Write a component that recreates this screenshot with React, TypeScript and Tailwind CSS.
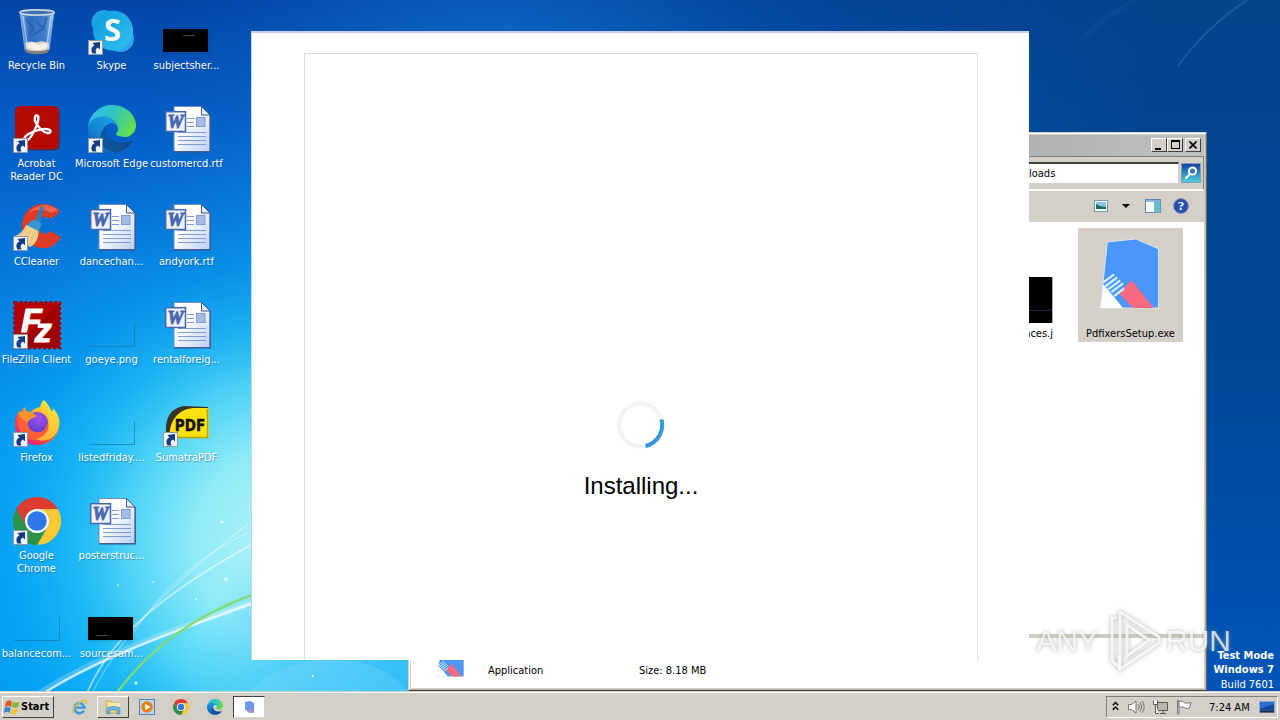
import React, { useId } from "react";

type IconProps = { className?: string };

const shellFont = "font-['DejaVu_Sans_Condensed','Noto_Sans',sans-serif]";

function RecycleBinIcon({ className }: IconProps) {
  return (
    <svg viewBox="0 0 48 48" className={className} aria-hidden="true">
      <defs>
        <linearGradient id="binGlass" x1="0" x2="1">
          <stop offset="0" stopColor="#9cc6ee" stopOpacity=".85" />
          <stop offset=".3" stopColor="#4f86d2" stopOpacity=".55" />
          <stop offset=".75" stopColor="#6fa3e0" stopOpacity=".6" />
          <stop offset="1" stopColor="#cfe4f8" stopOpacity=".85" />
        </linearGradient>
      </defs>
      <path d="M7 5L12 43C17 47 31 47 36 43L41 5Z" fill="url(#binGlass)" stroke="#86b2e2" strokeWidth=".8" />
      <path d="M12 36C18 33 21 36 25 35 30 33 33 36 36 36L36 42C30 46 18 46 13 42Z" fill="#d9d6cf" />
      <path d="M14 37l6-2 5 3 6-2 4 2-2 4-9 1-9-2z" fill="#f5f2ea" />
      <path d="M12 42C18 45 30 45 36 42L35.600 45C30 48 18 48 12.600 45Z" fill="#857d75" />
      <ellipse cx="24" cy="5.500" rx="17.200" ry="2.600" fill="#3e6fb4" stroke="#ccd5dc" strokeWidth="1.600" />
      <path d="M13 12l7 9-4 8M34 10l-4 12-10 6M23 14l8 8" stroke="#2355a5" strokeWidth="1.500" fill="none" opacity=".75" />
      <path d="M10 9l4 28" stroke="#e3f0fc" strokeWidth="1.200" opacity=".6" />
      <path d="M38 9l-4 28" stroke="#e3f0fc" strokeWidth="1.200" opacity=".6" />
    </svg>
  );
}

function SkypeIcon({ className }: IconProps) {
  return (
    <svg viewBox="0 0 48 48" className={className} aria-hidden="true">
      <defs>
        <linearGradient id="skypeBlue" x1="0" y1="0" x2="1" y2="1">
          <stop offset="0" stopColor="#0c9ade" />
          <stop offset="1" stopColor="#33c1ee" />
        </linearGradient>
      </defs>
      <circle cx="16" cy="15.500" r="12.500" fill="#1fa4e2" />
      <circle cx="32.500" cy="31.500" r="13.500" fill="#2aa5ea" />
      <circle cx="25" cy="23.500" r="20" fill="url(#skypeBlue)" />
      <text x="24.500" y="34" textAnchor="middle" fontFamily="Open Sans, sans-serif" fontWeight="700" fontSize="31" fill="#fff">S</text>
    </svg>
  );
}

function AcrobatIcon({ className }: IconProps) {
  return (
    <svg viewBox="0 0 48 48" className={className} aria-hidden="true">
      <rect x="3.500" y="2.500" width="44" height="43.500" rx="6" fill="#123f80" opacity=".55" />
      <rect x="2" y="1" width="44" height="43.500" rx="5.500" fill="#b30b00" />
      <path
        d="M11 34.500c0-4 10-9 17-10.200 6-1 10 .3 9.600 2.300-.6 2.600-5.600 1.400-9.600-2.300-4.600-4.200-7-8.500-6-12.500 .6-2.200 3.400-2 3.400 1 0 4.600-4 13.400-7.600 19.100-2.800 4-6.800 5.600-6.800 2.600z"
        fill="none"
        stroke="#fff"
        strokeWidth="2.300"
      />
    </svg>
  );
}

function EdgeIcon({ className }: IconProps) {
  const id = useId();
  return (
    <svg viewBox="0 0 256 256" className={className} aria-hidden="true">
      <defs>
        <linearGradient id={id + "a"} x1="0" x2="1">
          <stop offset="0" stopColor="#0c59a4" />
          <stop offset="1" stopColor="#114a8b" />
        </linearGradient>
        <linearGradient id={id + "b"} x1=".8" y1=".2" x2=".3" y2="1">
          <stop offset="0" stopColor="#1b9de2" />
          <stop offset=".5" stopColor="#1683d2" />
          <stop offset="1" stopColor="#0c5fb0" />
        </linearGradient>
        <linearGradient id={id + "c"} x1="0" y1=".2" x2="1" y2=".6">
          <stop offset="0" stopColor="#35c1f1" />
          <stop offset=".45" stopColor="#2fc2c4" />
          <stop offset="1" stopColor="#66e04c" />
        </linearGradient>
      </defs>
      <path fill={"url(#" + id + "a)"} d="M231,190.500c-3.400,1.800-6.900,3.400-10.500,4.700c-11.500,4.300-23.600,6.500-35.900,6.500c-47.300,0-88.500-32.500-88.500-74.300c0.100-11.400,6.400-21.900,16.400-27.300c-42.800,1.800-53.800,46.400-53.800,72.500c0,74,68.100,81.400,82.800,81.400c7.900,0,19.800-2.300,27-4.600l1.300-0.400c27.600-9.500,51-28.100,66.600-52.800c1.200-1.900,0.600-4.300-1.200-5.500C233.900,189.900,232.300,189.800,231,190.500z" />
      <path fill={"url(#" + id + "b)"} d="M105.700,241.400c-8.900-5.500-16.600-12.800-22.700-21.300c-26.300-36-18.400-86.500,17.600-112.800c3.800-2.700,7.700-5.200,11.900-7.200c3.100-1.500,8.400-4.100,15.500-4c10.100,0.100,19.600,4.900,25.700,13c4,5.400,6.300,11.900,6.400,18.700c0-0.200,24.500-79.600-80-79.600c-43.900,0-80,41.700-80,78.200c-0.200,19.300,4,38.500,12.100,56c27.600,58.800,94.800,87.600,156.400,67.100C147.500,256.100,124.500,253.200,105.700,241.400z" />
      <path fill={"url(#" + id + "c)"} d="M152.300,148.900c-0.800,1-3.300,2.500-3.300,5.700c0,2.600,1.700,5.100,4.700,7.200c14.400,10,41.500,8.700,41.600,8.700c10.700,0,21.100-2.900,30.300-8.300c18.800-11,30.400-31.100,30.400-52.900c0.300-22.400-8-37.300-11.300-43.900C223.500,23.900,177.700,0,128,0C58,0,1,56.200,0,126.200c0.500-36.500,36.800-66,80-66c3.500,0,23.500,0.300,42,10.100c16.300,8.600,24.900,18.900,30.800,29.200c6.200,10.700,7.300,24.100,7.300,29.500C160.100,134.300,157.400,142.300,152.300,148.900z" />
    </svg>
  );
}

function WordIcon({ className }: IconProps) {
  const id = useId();
  return (
    <svg viewBox="0 0 48 48" className={className} aria-hidden="true">
      <defs>
        <linearGradient id={id} x1="0" y1="0" x2="1" y2="1">
          <stop offset=".4" stopColor="#fdfeff" />
          <stop offset="1" stopColor="#b9cef2" />
        </linearGradient>
      </defs>
      <path d="M11 1.500H38.500L47 10V46.500H11Z" fill={"url(#" + id + ")"} stroke="#6f8cc4" />
      <path d="M38.500 1.500V10H47Z" fill="#e6eefa" stroke="#3f5488" />
      <path d="M47.200 10V46.800H11" fill="none" stroke="#3a5288" strokeWidth="1.200" />
      <g stroke="#7f9bd6" strokeWidth="1.100">
        <path d="M24 13.500H31M24 17.500H31M24 21.500H31M15 27.500H43M15 31.500H43M15 35.500H43M15 39.500H43" />
      </g>
      <rect x="33.500" y="12.500" width="8.500" height="9" fill="#a4bce6" stroke="#7f9bd6" />
      <rect x="2.700" y="6.700" width="19.800" height="19.800" fill="#eef3fc" stroke="#4666b0" strokeWidth="1.500" />
      <text x="12.500" y="22.500" textAnchor="middle" fontFamily="Liberation Serif, serif" fontWeight="700" fontStyle="italic" fontSize="18" fill="#4a68ae" stroke="#4a68ae" strokeWidth="1">W</text>
    </svg>
  );
}

function CCleanerIcon({ className }: IconProps) {
  return (
    <svg viewBox="0 0 48 48" className={className} aria-hidden="true">
      <path d="M47 9C42 0 22-4 12 11 4 26 13 44 28 45 38 46 44 41 48 34L37 28C33 33 26 31 25 23 25 15 33 11 38 16Z" fill="#dd3b26" />
      <path d="M45 7C38 0 22 0 15 11 20 6 31 5 38 10Z" fill="#f0654c" />
      <path d="M28 3L31 4.500 26.500 22 21 20Z" fill="#2b7fc0" />
      <path d="M18 18C21 16 28 19 28.500 22L25 29 13 23Z" fill="#3a97d4" />
      <path d="M13 22L25.500 28C26 35 22 42 17 44L2 33C7 31 11 27 13 22Z" fill="#f2cf8e" />
      <path d="M14 25L6 34M18 27L11 39M22 29L16 42" stroke="#e3ba78" strokeWidth="1" />
    </svg>
  );
}

function FileZillaIcon({ className }: IconProps) {
  return (
    <svg viewBox="0 0 48 48" className={className + " overflow-visible"} aria-hidden="true">
      <rect x="1.500" y="1.500" width="45.500" height="45.500" fill="#b30000" stroke="#a00000" strokeWidth="2.500" strokeDasharray="3 2" />
      <path d="M47 2V47H2Z" fill="#960000" opacity=".7" />
      <text x="8" y="31" fontFamily="Liberation Sans, sans-serif" fontWeight="700" fontStyle="italic" fontSize="34" fill="#fff" stroke="#fff">
        F
        <tspan dx="-7" dy="10">z</tspan>
      </text>
    </svg>
  );
}

function FirefoxIcon({ className }: IconProps) {
  return (
    <svg viewBox="0 0 48 48" className={className} aria-hidden="true">
      <defs>
        <linearGradient id="foxBody" x1=".85" y1=".1" x2=".2" y2=".95">
          <stop offset="0" stopColor="#fff14a" />
          <stop offset=".35" stopColor="#ffb02b" />
          <stop offset=".65" stopColor="#ff5036" />
          <stop offset="1" stopColor="#e31587" />
        </linearGradient>
        <radialGradient id="foxGlobe" cx=".6" cy=".3" r=".8">
          <stop offset="0" stopColor="#a54df0" />
          <stop offset="1" stopColor="#4b3ec4" />
        </radialGradient>
      </defs>
      <path d="M31 1C35 5 38 9 38.500 14 40 13 40 10 39.600 9 45 14 47 20 46.500 26 45 38 36 46 24.500 46 11 46 2 37 2 25 2 20 4 15 6.500 11L7 15C8.500 12 10 9.500 12 8 12 11 14 13 17 13.500 20 10 24 9 27 8 28 5 29 2 31 1Z" fill="url(#foxBody)" />
      <circle cx="24" cy="24" r="11" fill="url(#foxGlobe)" />
      <path d="M5 16C9 18 12 20 15 22 14 30 20 34 27 33 31 32 34 28 34 24 38 31 34 39 26 41 16 43 6 36 5 24Z" fill="#ff5e38" />
      <path d="M5 14C12 11 20 13 24 17 20 19 18 19 15 23 10 22 7 19 5 14Z" fill="#ff932e" />
      <path d="M31 1C28 9 39 15 36 27 35 35 28 39 23 40 34 45 46 37 45 24 44 12 34 11 31 1Z" fill="#ffd83a" opacity=".75" />
    </svg>
  );
}

function ChromeIcon({ className }: IconProps) {
  return (
    <svg viewBox="0 0 48 48" className={className} aria-hidden="true">
      <path d="M24 12H44.800A24 24 0 0 0 3.200 12L13.600 30A12 12 0 0 1 24 12Z" fill="#de3c30" />
      <path d="M24 12H44.800A24 24 0 0 1 24 48L34.400 30A12 12 0 0 0 24 12Z" fill="#fcc934" />
      <path d="M3.200 12A24 24 0 0 0 24 48L34.400 30A12 12 0 0 1 13.600 30Z" fill="#2b9247" />
      <circle cx="24" cy="24" r="12" fill="#fff" />
      <circle cx="24" cy="24" r="9.800" fill="#2f78ea" />
    </svg>
  );
}

function SumatraIcon({ className }: IconProps) {
  return (
    <svg viewBox="0 0 48 48" className={className} aria-hidden="true">
      <path d="M3 34C2 15 11 8 22 7L45 8V11L10 32 14 38H3Z" fill="#39342a" />
      <path d="M6.500 38C6 20 17 9.500 31 9H45.500V38Z" fill="#fce10e" />
      <path d="M44.500 10V38.500H14" fill="none" stroke="#b9a200" strokeWidth="1.500" />
      <text x="27" y="32" textAnchor="middle" fontFamily="DejaVu Sans Condensed, sans-serif" fontWeight="700" fontSize="15" fill="#111" stroke="#111" strokeWidth=".4">PDF</text>
    </svg>
  );
}

function PdfixersIcon({ className }: IconProps) {
  return (
    <svg viewBox="0 0 60 72" className={className} aria-hidden="true">
      <path d="M8 4L37 1 60 11V71H1Z" fill="#4b97f8" stroke="#d9e6f4" />
      <path d="M4 47L24 71H1Z" fill="#fff" />
      <path d="M19 55L33 43 55 71H34Z" fill="#f76a82" />
      <path d="M4 45l11-8M6 49l12-9M9 52l12-9M12 55l12-9M15 59l10-8" stroke="#d2f2fb" strokeWidth="2.200" />
    </svg>
  );
}

function ShortcutBadge() {
  return (
    <svg viewBox="0 0 15 15" className="absolute bottom-0 left-0 h-[15px] w-[15px]" aria-hidden="true">
      <rect x=".5" y=".5" width="14" height="14" fill="#f2f5f9" stroke="#8f9aa8" />
      <path d="M4.500 13.500C2.500 10 3.500 6.500 6.500 5.500L4.500 3 12 2 12 9.500 10 7.500C7.500 8.500 7 10.500 8.500 13.500Z" fill="#123d86" />
    </svg>
  );
}

function BlackThumb({ low = false }: { low?: boolean }) {
  return (
    <span className="flex h-full items-end pb-[3px]">
      <span className={low ? "flex h-[23px] w-[45px] items-end bg-black pb-1 pl-2 shadow" : "flex h-[23px] w-[45px] items-start bg-black pt-1.5 pl-5 shadow"}>
        <span className="h-px w-3 bg-[#4a4a38]" />
      </span>
    </span>
  );
}

function FaintThumb() {
  return (
    <span className="flex h-full items-end pb-[2px] pl-px">
      <span className="h-6 w-[46px] border-r border-b border-[#17709c]/60" />
    </span>
  );
}

type Item = { label: string; art: React.ReactNode; shortcut?: boolean };

const full = "h-12 w-12";

const items: Item[] = [
  { label: "Recycle Bin", art: <RecycleBinIcon className={full} /> },
  { label: "Acrobat\nReader DC", art: <AcrobatIcon className={full} />, shortcut: true },
  { label: "CCleaner", art: <CCleanerIcon className={full} />, shortcut: true },
  { label: "FileZilla Client", art: <FileZillaIcon className={full} />, shortcut: true },
  { label: "Firefox", art: <FirefoxIcon className={full} />, shortcut: true },
  { label: "Google\nChrome", art: <ChromeIcon className={full} />, shortcut: true },
  { label: "balancecom...", art: <FaintThumb /> },
  { label: "Skype", art: <SkypeIcon className={full} />, shortcut: true },
  { label: "Microsoft Edge", art: <EdgeIcon className={full} />, shortcut: true },
  { label: "dancechan...", art: <WordIcon className={full} /> },
  { label: "goeye.png", art: <FaintThumb /> },
  { label: "listedfriday....", art: <FaintThumb /> },
  { label: "posterstruc...", art: <WordIcon className={full} /> },
  { label: "sourcesam...", art: <BlackThumb low /> },
  { label: "subjectsher...", art: <BlackThumb /> },
  { label: "customercd.rtf", art: <WordIcon className={full} /> },
  { label: "andyork.rtf", art: <WordIcon className={full} /> },
  { label: "rentalforeig...", art: <WordIcon className={full} /> },
  { label: "SumatraPDF", art: <SumatraIcon className={full} />, shortcut: true },
];

function Wallpaper() {
  return (
    <svg viewBox="0 0 1280 692" preserveAspectRatio="none" className="absolute inset-0 h-full w-full" aria-hidden="true">
      <defs>
        <linearGradient id="sky" x1="0" y1="0" x2="0" y2="1">
          <stop offset="0" stopColor="#0345a7" />
          <stop offset=".2" stopColor="#045fc8" />
          <stop offset=".45" stopColor="#067de0" />
          <stop offset=".65" stopColor="#0499f0" />
          <stop offset="1" stopColor="#009ff4" />
        </linearGradient>
        <radialGradient id="glow" gradientUnits="userSpaceOnUse" cx="290" cy="545" r="440">
          <stop offset="0" stopColor="#b4f2f8" />
          <stop offset=".22" stopColor="#90ebf7" />
          <stop offset=".36" stopColor="#5adaf6" stopOpacity=".92" />
          <stop offset=".5" stopColor="#22bff6" stopOpacity=".75" />
          <stop offset=".65" stopColor="#0aa8f4" stopOpacity=".5" />
          <stop offset="1" stopColor="#0a80e0" stopOpacity="0" />
        </radialGradient>
        <radialGradient id="floor" gradientUnits="userSpaceOnUse" cx="390" cy="700" r="200">
          <stop offset="0" stopColor="#2fbdf7" stopOpacity=".95" />
          <stop offset=".5" stopColor="#3cc4f8" stopOpacity=".7" />
          <stop offset="1" stopColor="#3cc4f8" stopOpacity="0" />
        </radialGradient>
        <radialGradient id="topGlow" gradientUnits="userSpaceOnUse" cx="520" cy="220" r="420">
          <stop offset="0" stopColor="#1f9ae8" stopOpacity=".8" />
          <stop offset="1" stopColor="#0a60c0" stopOpacity="0" />
        </radialGradient>
        <linearGradient id="east" x1="0" y1="0" x2="0" y2="1">
          <stop offset="0" stopColor="#05438a" />
          <stop offset=".5" stopColor="#004797" />
          <stop offset="1" stopColor="#0055b8" />
        </linearGradient>
        <linearGradient id="eastFade" x1="0" x2="1">
          <stop offset=".4" stopColor="#fff" stopOpacity="0" />
          <stop offset=".9" stopColor="#fff" />
        </linearGradient>
        <mask id="eastMask">
          <rect width="1280" height="692" fill="url(#eastFade)" />
        </mask>
      </defs>
      <rect width="1280" height="692" fill="url(#sky)" />
      <rect width="1280" height="692" fill="url(#topGlow)" />
      <rect width="1280" height="692" fill="url(#glow)" />
      <rect width="1280" height="692" fill="url(#floor)" />
      <rect width="1280" height="692" fill="url(#east)" mask="url(#eastMask)" />
      <path d="M250 692C285 655 370 645 408 692Z" fill="#8adcfb" opacity=".25" />
      <g fill="none" stroke="#fff">
        <path d="M40 694C100 655 190 625 258 602" strokeWidth="6" opacity=".22" />
        <path d="M44 694C105 655 190 627 258 602" strokeWidth="2.500" opacity=".7" />
        <path d="M87 694C110 640 160 595 256 543" strokeWidth="1.800" opacity=".55" />
        <path d="M92 694C125 630 165 590 254 520" strokeWidth="1.200" opacity=".35" />
        <path d="M130 640C160 590 200 555 256 530" strokeWidth="1" opacity=".4" />
      </g>
      <path d="M118 692C155 643 200 615 256 594" fill="none" stroke="#7fdc6c" strokeWidth="2.200" />
      <g fill="#fff" opacity=".7">
        <circle cx="222" cy="523" r="1.500" />
        <circle cx="226" cy="580" r="1.800" />
        <circle cx="136" cy="684" r="1.800" />
        <circle cx="153" cy="583" r="1" />
        <circle cx="118" cy="586" r="1" />
        <circle cx="196" cy="600" r="1" />
        <circle cx="313" cy="677" r="1.200" />
      </g>
      <path d="M1080 42C1100 20 1115 12 1135 0" fill="none" stroke="#3f79bd" strokeWidth="5" opacity=".1" />
      <path d="M1178 66C1200 35 1225 15 1247 0" fill="none" stroke="#6ea3dd" strokeWidth="2" opacity=".22" />
    </svg>
  );
}

const raised =
  "border border-t-white border-l-white border-r-[#404040] border-b-[#404040] bg-[#d4d0c8]";

function ExplorerWindow() {
  return (
    <section className="absolute top-[132px] right-[73px] bottom-0 left-[408px] flex flex-col border border-[#d4d0c8] border-r-[#6b6860] border-b-[#404040] bg-[#d4d0c8]">
      <div className="flex flex-1 flex-col border border-white border-r-[#b5b1a8] border-b-[#b5b1a8] p-px">
        <header className="flex h-[21px] shrink-0 items-center justify-end bg-gradient-to-r from-[#808080] to-[#c0c0c0] pr-[3px] pb-[2px]">
          <button aria-label="Minimize" className={`flex h-[14px] w-4 items-end justify-start pb-px pl-[3px] ${raised}`}>
            <span className="h-[2px] w-1.5 bg-black" />
          </button>
          <button aria-label="Maximize" className={`flex h-[14px] w-4 items-center justify-center ${raised}`}>
            <span className="h-[9px] w-[9px] border border-t-2 border-black" />
          </button>
          <button aria-label="Close" className={`ml-[2px] flex h-[14px] w-4 items-center justify-center ${raised}`}>
            <svg viewBox="0 0 8 8" className="h-2 w-2" aria-hidden="true">
              <path d="M.5.5l7 7M7.500.5l-7 7" stroke="#000" strokeWidth="1.600" />
            </svg>
          </button>
        </header>
        <div className="flex h-[34px] shrink-0 items-center justify-end gap-[2px] border border-[#808080] border-l-0 border-b-white pr-[2px]">
          <input
            aria-label="Search"
            defaultValue="loads"
            className="h-[22px] w-[154px] border border-t-2 border-[#d4d0c8] border-t-[#404040] bg-white pl-[3px] text-[11px] leading-[14px] text-black outline-none"
          />
          <button aria-label="Start search" className="flex h-5 w-5 items-center justify-center border border-[#7d9cc0] bg-gradient-to-b from-[#1d3fa6] to-[#4fd0d8]">
            <svg viewBox="0 0 16 16" className="h-4 w-4" fill="none" stroke="#fff" aria-hidden="true">
              <circle cx="9.500" cy="6" r="3.600" strokeWidth="2" fill="#3f74c8" />
              <path d="M7 9L2.500 13.500" strokeWidth="2.400" />
            </svg>
          </button>
        </div>
        <div className="flex h-8 shrink-0 items-center justify-end border-t border-white pr-[15px] pb-[2px]">
          <button aria-label="Change view">
            <svg viewBox="0 0 14 12" className="h-3 w-[14px]" aria-hidden="true">
              <rect x=".5" y=".5" width="13" height="11" fill="#fff" stroke="#6f9cc0" />
              <rect x="2" y="2" width="10" height="7" fill="#8cc4ec" />
              <path d="M2 4l4 2 6 1v2H2z" fill="#1c6c5c" />
            </svg>
          </button>
          <button aria-label="More views" className="ml-3 flex w-3 justify-center">
            <svg viewBox="0 0 8 4" className="h-1 w-2" aria-hidden="true">
              <path d="M0 0H8L4 4Z" fill="#000" />
            </svg>
          </button>
          <button aria-label="Preview pane" className="ml-[13px]">
            <svg viewBox="0 0 16 14" className="h-[14px] w-4" aria-hidden="true">
              <rect x=".5" y=".5" width="15" height="13" fill="#fff" stroke="#5b86b4" />
              <path d="M1 2H15" stroke="#8fb5dd" strokeWidth="2" />
              <rect x="9.500" y="3" width="5.500" height="10" fill="#5fbfcc" stroke="#7fb4cc" />
            </svg>
          </button>
          <button aria-label="Help" className="ml-3">
            <svg viewBox="0 0 16 16" className="h-4 w-4" aria-hidden="true">
              <circle cx="8" cy="8" r="7.500" fill="#2a4fa8" stroke="#8296c8" />
              <text x="8" y="12.300" textAnchor="middle" fontFamily="Liberation Serif, serif" fontWeight="700" fontSize="13" fill="#fff">?</text>
            </svg>
          </button>
        </div>
        <div className="flex flex-1 items-start justify-end bg-white pt-[6px] pr-[21px]">
          <div className="mr-[25px] flex h-[114px] flex-col items-end pt-[49px]">
            <span className="flex h-[46px] w-[46px] items-end border-r border-[#aaa] bg-black pb-3 pl-5">
              <span className="h-px w-full bg-[#20204a]" />
            </span>
            <span className="mt-1 text-[11px] leading-[13px] text-black">nces.j</span>
          </div>
          <button className="flex h-[114px] w-[105px] flex-col items-center bg-[#d4d0c8] pt-[10px]">
            <PdfixersIcon className="mr-1 h-[71px] w-[60px]" />
            <span className="mt-[18px] text-[11px] leading-[13px] text-black">PdfixersSetup.exe</span>
          </button>
        </div>
        <footer className="flex h-[54px] shrink-0 items-end border-t-4 border-[#cfccc2] bg-white pb-[11px] pl-[26px] text-[11px] leading-[13px] text-black">
          <PdfixersIcon className="h-8 w-[27px]" />
          <span className="ml-6 w-[151px]">Application</span>
          <span>Size: 8.18 MB</span>
        </footer>
      </div>
    </section>
  );
}

function InstallerWindow() {
  return (
    <section className="absolute top-[31px] right-[251px] bottom-[31px] left-[251px] flex flex-col border-t-2 border-l border-t-[#c3d0e4] border-l-[#b8dcec] bg-white pt-5 pr-[51px] pl-[52px]">
      <div role="status" className="flex flex-1 flex-col items-center border border-b-0 border-[#dcdcdc] pt-[347px]">
        <svg viewBox="0 0 48 48" className="h-12 w-12" fill="none" strokeWidth="4" aria-hidden="true">
          <circle cx="23.500" cy="24" r="21.500" stroke="#f3f3f3" />
          <path d="M44.500 18.500A21.500 21.500 0 0 1 28.500 45" stroke="#3498db" />
        </svg>
        <p className="mt-[23px] font-['Liberation_Sans',sans-serif] text-2xl leading-7 text-black">Installing...</p>
      </div>
    </section>
  );
}

function Watermark() {
  return (
    <div className="pointer-events-none absolute right-[49px] bottom-[18px] flex h-16 items-center font-['Liberation_Sans',sans-serif] text-3xl leading-8 text-white/75 drop-shadow-[0_0_2px_#999999]">
      <span>ANY</span>
      <svg viewBox="0 0 60 64" className="mx-1 h-16 w-[60px]" fill="none" stroke="#fff" strokeOpacity=".8" strokeWidth="3" aria-hidden="true">
        <path d="M15 9H10V52L17 58V47" />
        <path d="M18 3L57 28V34L18 60Z" />
        <path d="M25 16L47 31 25 47Z" />
      </svg>
      <span>RUN</span>
    </div>
  );
}

function Taskbar() {
  return (
    <footer className="z-10 flex h-[29px] shrink-0 items-center border-t border-[#d4d0c8] bg-[#d4d0c8] px-[2px] pt-[2px] shadow-[inset_0_1px_0_#ffffff]">
      <button className={`flex h-[22px] w-[52px] items-center gap-px pl-px text-[11px] font-bold text-black ${raised}`}>
        <svg viewBox="0 0 16 16" className="h-4 w-4 shrink-0" aria-hidden="true">
          <path d="M2 3C4 1 6 1 8 2.500L7 8C5 6.500 3 6.500 .8 8Z" fill="#e5562c" />
          <path d="M9 3C11 4 13 4 15.500 2.500L14 8C12 9 10 9 8 8Z" fill="#7ab830" />
          <path d="M.6 9C3 7.500 5 7.500 6.800 9L5.600 14C4 12.500 2 12.500 0 14Z" fill="#3a86d8" />
          <path d="M7.800 9.500C10 10.500 12 10.500 13.800 9L12.400 14C10.500 15.500 8.500 15.500 6.500 14.500Z" fill="#f7c22c" />
        </svg>
        <span>Start</span>
      </button>
      <nav className="ml-[9px] flex gap-[2px]">
        <button aria-label="Internet Explorer" className="flex h-[22px] w-8 items-center justify-center">
          <svg viewBox="0 0 16 16" className="h-4 w-4" fill="none" aria-hidden="true">
            <path d="M13 11.500A5 5 0 1 1 13.500 8.500H4.500" stroke="#3a9fe0" strokeWidth="2.600" />
            <path d="M1.500 14.500C-.5 11 11-1 14.800 1.800 15.600 2.600 15 4 14.500 5" stroke="#e9bb33" strokeWidth="1.400" />
          </svg>
        </button>
        <button aria-label="Windows Explorer" className={`flex h-[22px] w-8 items-center justify-center ${raised}`}>
          <svg viewBox="0 0 16 16" className="h-4 w-4" aria-hidden="true">
            <path d="M1 2H6L7 4H14V14H1Z" fill="#f0d878" stroke="#c9a94a" />
            <path d="M3 4H15V8H3Z" fill="#f8ebad" />
            <path d="M2 15V9C5 7 12 7 15 9V15H12V11H5V15Z" fill="#69b6e0" stroke="#3f8dbd" strokeWidth=".6" />
          </svg>
        </button>
        <button aria-label="Media Player" className="flex h-[22px] w-8 items-center justify-center">
          <svg viewBox="0 0 16 16" className="h-4 w-4" aria-hidden="true">
            <rect x=".5" y=".5" width="15" height="15" fill="#bcd8ef" stroke="#4d83b8" />
            <circle cx="8" cy="8" r="5.800" fill="#f07d13" />
            <path d="M6.200 4.800L11.500 8 6.200 11.200Z" fill="#fff" />
          </svg>
        </button>
        <button aria-label="Chrome" className="flex h-[22px] w-8 items-center justify-center">
          <ChromeIcon className="h-4 w-4" />
        </button>
        <button aria-label="Edge" className="flex h-[22px] w-8 items-center justify-center">
          <EdgeIcon className="h-4 w-4" />
        </button>
        <button aria-label="Setup" className="flex h-[22px] w-8 items-center justify-center border border-t-[#404040] border-r-[#d4d0c8] border-b-[#d4d0c8] border-l-[#404040] bg-white">
          <svg viewBox="0 0 10 12" className="h-3 w-[10px]" aria-hidden="true">
            <path d="M1 1L6 0 10 2V12H5L1 8Z" fill="#6b95ec" />
            <path d="M4 9L7 8 10 12H5Z" fill="#b58fc9" />
          </svg>
        </button>
      </nav>
      <div className="ml-auto flex h-[22px] w-[172px] items-center border border-t-[#808080] border-r-white border-b-white border-l-[#808080] pl-[5px]">
        <button aria-label="Show hidden icons" className="mb-[2px]">
          <svg viewBox="0 0 7 10" className="h-[10px] w-[7px]" fill="none" stroke="#000" strokeWidth="1.500" aria-hidden="true">
            <path d="M.8 4.200L3.500 1.500 6.200 4.200M.8 8.700L3.500 6 6.200 8.700" />
          </svg>
        </button>
        <svg viewBox="0 0 18 16" className="ml-2 h-4 w-[18px]" fill="none" stroke="#77736c" aria-hidden="true">
          <path d="M1.500 5.500H4.500L9 2V14L4.500 10.500H1.500Z" fill="#fff" />
          <path d="M11 5C12.500 6.500 12.500 9.500 11 11M13 3.500C15 6 15 10 13 12.500M15 2C17.800 5 17.800 11 15 14" />
        </svg>
        <svg viewBox="0 0 17 16" className="ml-[7px] h-4 w-[17px]" fill="#fff" stroke="#5c5954" aria-hidden="true">
          <path d="M5.500 3.500H15.500V11.500H5.500Z" fill="#b9b6b0" />
          <path d="M8 14.500H14M11 12V14" />
          <path d="M1.500 1.500V5.500H5.500V1.500M3.500 5.500V14.500H7" fill="#fff" />
        </svg>
        <svg viewBox="0 0 16 16" className="ml-[7px] h-4 w-4" fill="#fff" stroke="#77736c" aria-hidden="true">
          <path d="M1.500 1.500H3V15H1.500Z" />
          <path d="M3 2.500C6 1.500 7.500 3 9 4 11 4.500 13 4 15 3.500L13.500 9C11 10 9.500 9.500 8 8.500 6 7.500 5 8 3 8.500Z" />
        </svg>
        <time className="ml-[17px] flex-1 text-[11px] leading-[13px] whitespace-nowrap text-black">7:24 AM</time>
        <button aria-label="Show desktop" className="mr-[2px]">
          <svg viewBox="0 0 16 12" className="h-3 w-4" aria-hidden="true">
            <rect x=".5" y=".5" width="15" height="11" fill="#2a6fd0" stroke="#8fa6c4" />
            <path d="M1 8L15 3V9H1Z" fill="#15459c" />
            <path d="M1 10.500H15" stroke="#1c2c48" strokeWidth="2" />
          </svg>
        </button>
      </div>
    </footer>
  );
}

export default function App() {
  return (
    <div className={`flex h-screen flex-col overflow-hidden ${shellFont}`}>
      <main className="relative min-h-0 flex-1">
        <Wallpaper />
        <div className="relative grid w-max auto-cols-[73px] grid-flow-col grid-rows-[repeat(7,98px)] gap-x-[2px] pt-[7px]">
          {items.map((item) => (
            <button key={item.label} className="flex flex-col items-center gap-1">
              <span className="relative block h-12 w-12 shrink-0">
                {item.art}
                {item.shortcut && <ShortcutBadge />}
              </span>
              <span className="text-[11px] leading-[13px] whitespace-pre text-white [text-shadow:1px_1px_1px_rgba(0,30,80,0.35)]">
                {item.label}
              </span>
            </button>
          ))}
        </div>
        <ExplorerWindow />
        <InstallerWindow />
        <Watermark />
        <div className="absolute right-[6px] bottom-0 text-right text-[11px] leading-[14px] text-white">
          <p className="font-bold">Test Mode</p>
          <p className="font-bold">Windows 7</p>
          <p className="mt-[2px] leading-3">Build 7601</p>
        </div>
      </main>
      <Taskbar />
    </div>
  );
}
